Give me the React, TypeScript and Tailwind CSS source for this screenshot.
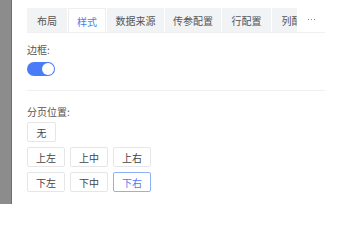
import React from 'react';

const tabs = [
  { t: '布局', w: 'w-[40px]' },
  { t: '样式', w: 'w-[38px]' },
  { t: '数据来源', w: 'w-[57px]' },
  { t: '传参配置', w: 'w-[56px]' },
  { t: '行配置', w: 'w-[49px]' },
  { t: '列配置', w: 'w-[49px]' },
];
const rows = [['无'], ['上左', '上中', '上右'], ['下左', '下中', '下右']];

export default function App() {
  return (
    <div className="flex h-[204px] w-[338px] overflow-hidden bg-white text-[10px] text-[#555] [font-family:'Noto_Sans_CJK_SC',sans-serif]">
      <div className="h-full w-[12px] shrink-0 border-r border-[#6f6f6f] bg-[#8c8c8c]" />
      <div className="flex w-[313px] shrink-0 flex-col pl-[15px]">
        <div className="mt-[8px] flex h-[25px] w-[298px] border-b border-[#f0f0f0]">
          <div className="flex w-[270px] gap-[1px] overflow-hidden">
            {tabs.map((x, i) => (
              <div
                key={x.t}
                className={
                  x.w +
                  (i === 1
                    ? ' flex h-[25px] shrink-0 items-center justify-center border border-b-0 border-[#eeeeee] bg-white text-[#4a7cf7]'
                    : ' flex h-[25px] shrink-0 items-center justify-center bg-[#f2f3f5]')
                }
              >
                {x.t}
              </div>
            ))}
          </div>
          <div className="flex w-[28px] items-center justify-center gap-[2px] bg-white pb-[2px]">
            <span className="h-[1px] w-[1px] bg-[#888]" />
            <span className="h-[1px] w-[1px] bg-[#888]" />
            <span className="h-[1px] w-[1px] bg-[#888]" />
          </div>
        </div>
        <div className="mt-[10px] leading-[14px]">边框:</div>
        <div className="mt-[5px] flex h-[14px] w-[28px] items-center justify-end rounded-full bg-[#4a7cf7] pr-[1px]">
          <div className="h-[12px] w-[12px] rounded-full bg-white" />
        </div>
        <div className="mt-[14px] h-px w-[298px] bg-[#f0f0f0]" />
        <div className="mt-[14px] leading-[14px]">分页位置:</div>
        <div className="mt-[3px] flex flex-col gap-[5px]">
          {rows.map((r, ri) => (
            <div key={ri} className="flex gap-[5px]">
              {r.map(b => (
                <div
                  key={b}
                  className={
                    (b === '下右'
                      ? 'border-[#8fb0f8] text-[#4a7cf7] '
                      : 'border-[#e6e6e6] text-[#444] ') +
                    (b === '无' ? 'w-[29px] ' : 'w-[38px] ') +
                    'flex h-[20px] items-center justify-center rounded-[2px] border bg-white'
                  }
                >
                  {b}
                </div>
              ))}
            </div>
          ))}
        </div>
      </div>
    </div>
  );
}
